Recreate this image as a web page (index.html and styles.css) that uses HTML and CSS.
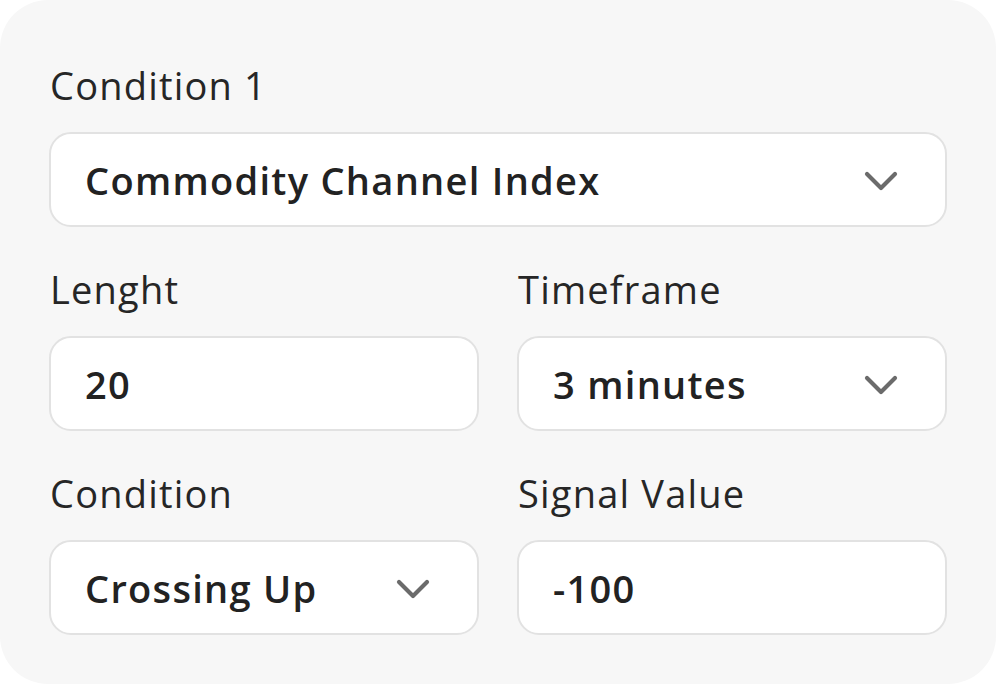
FILE: index.html
```html
<!DOCTYPE html>
<html lang="en">
<head>
<meta charset="utf-8">
<title>Condition</title>
<link rel="stylesheet" href="styles.css">
</head>
<body>
<div class="card">
  <div class="field full">
    <div class="label">Condition 1</div>
    <div class="box select">
      <span class="value">Commodity Channel Index</span>
      <svg class="chev" width="34" height="20" viewBox="0 0 34 20"><polyline points="3,3 17,17 31,3" fill="none" stroke="#6b6b6b" stroke-width="4.2" stroke-linecap="round" stroke-linejoin="round"/></svg>
    </div>
  </div>
  <div class="grid">
    <div class="field">
      <div class="label">Lenght</div>
      <div class="box"><span class="value">20</span></div>
    </div>
    <div class="field">
      <div class="label">Timeframe</div>
      <div class="box select">
        <span class="value">3 minutes</span>
        <svg class="chev" width="34" height="20" viewBox="0 0 34 20"><polyline points="3,3 17,17 31,3" fill="none" stroke="#6b6b6b" stroke-width="4.2" stroke-linecap="round" stroke-linejoin="round"/></svg>
      </div>
    </div>
    <div class="field">
      <div class="label">Condition</div>
      <div class="box select">
        <span class="value">Crossing Up</span>
        <svg class="chev" width="34" height="20" viewBox="0 0 34 20"><polyline points="3,3 17,17 31,3" fill="none" stroke="#6b6b6b" stroke-width="4.2" stroke-linecap="round" stroke-linejoin="round"/></svg>
      </div>
    </div>
    <div class="field">
      <div class="label">Signal Value</div>
      <div class="box"><span class="value">-100</span></div>
    </div>
  </div>
</div>
</body>
</html>
```
FILE: styles.css
```css
html, body {
  margin: 0;
  padding: 0;
  background: #ffffff;
}
body {
  font-family: "Open Sans", "Noto Sans", sans-serif;
  color: #222222;
}
.card {
  width: 996px;
  height: 684px;
  box-sizing: border-box;
  background: #f7f7f7;
  border-radius: 48px;
  padding: 63px 49px 0 49px;
}
.field {
  display: flex;
  flex-direction: column;
}
.label {
  font-size: 38px;
  line-height: 44px;
  font-weight: 400;
  letter-spacing: 1.2px;
  margin-left: 1px;
  color: #262626;
}
.box {
  margin-top: 25px;
  height: 95px;
  box-sizing: border-box;
  background: #ffffff;
  border: 2px solid #e2e2e2;
  border-radius: 22px;
  display: flex;
  align-items: center;
  padding: 0 47px 0 34px;
}
.value {
  font-size: 38px;
  font-weight: 600;
  letter-spacing: 1.3px;
  color: #222222;
  flex: 1;
}
.chev {
  display: block;
  flex: none;
  margin-top: 2px;
}
.grid {
  display: grid;
  grid-template-columns: 430px 430px;
  column-gap: 38px;
  row-gap: 40px;
  margin-top: 40px;
}
```
